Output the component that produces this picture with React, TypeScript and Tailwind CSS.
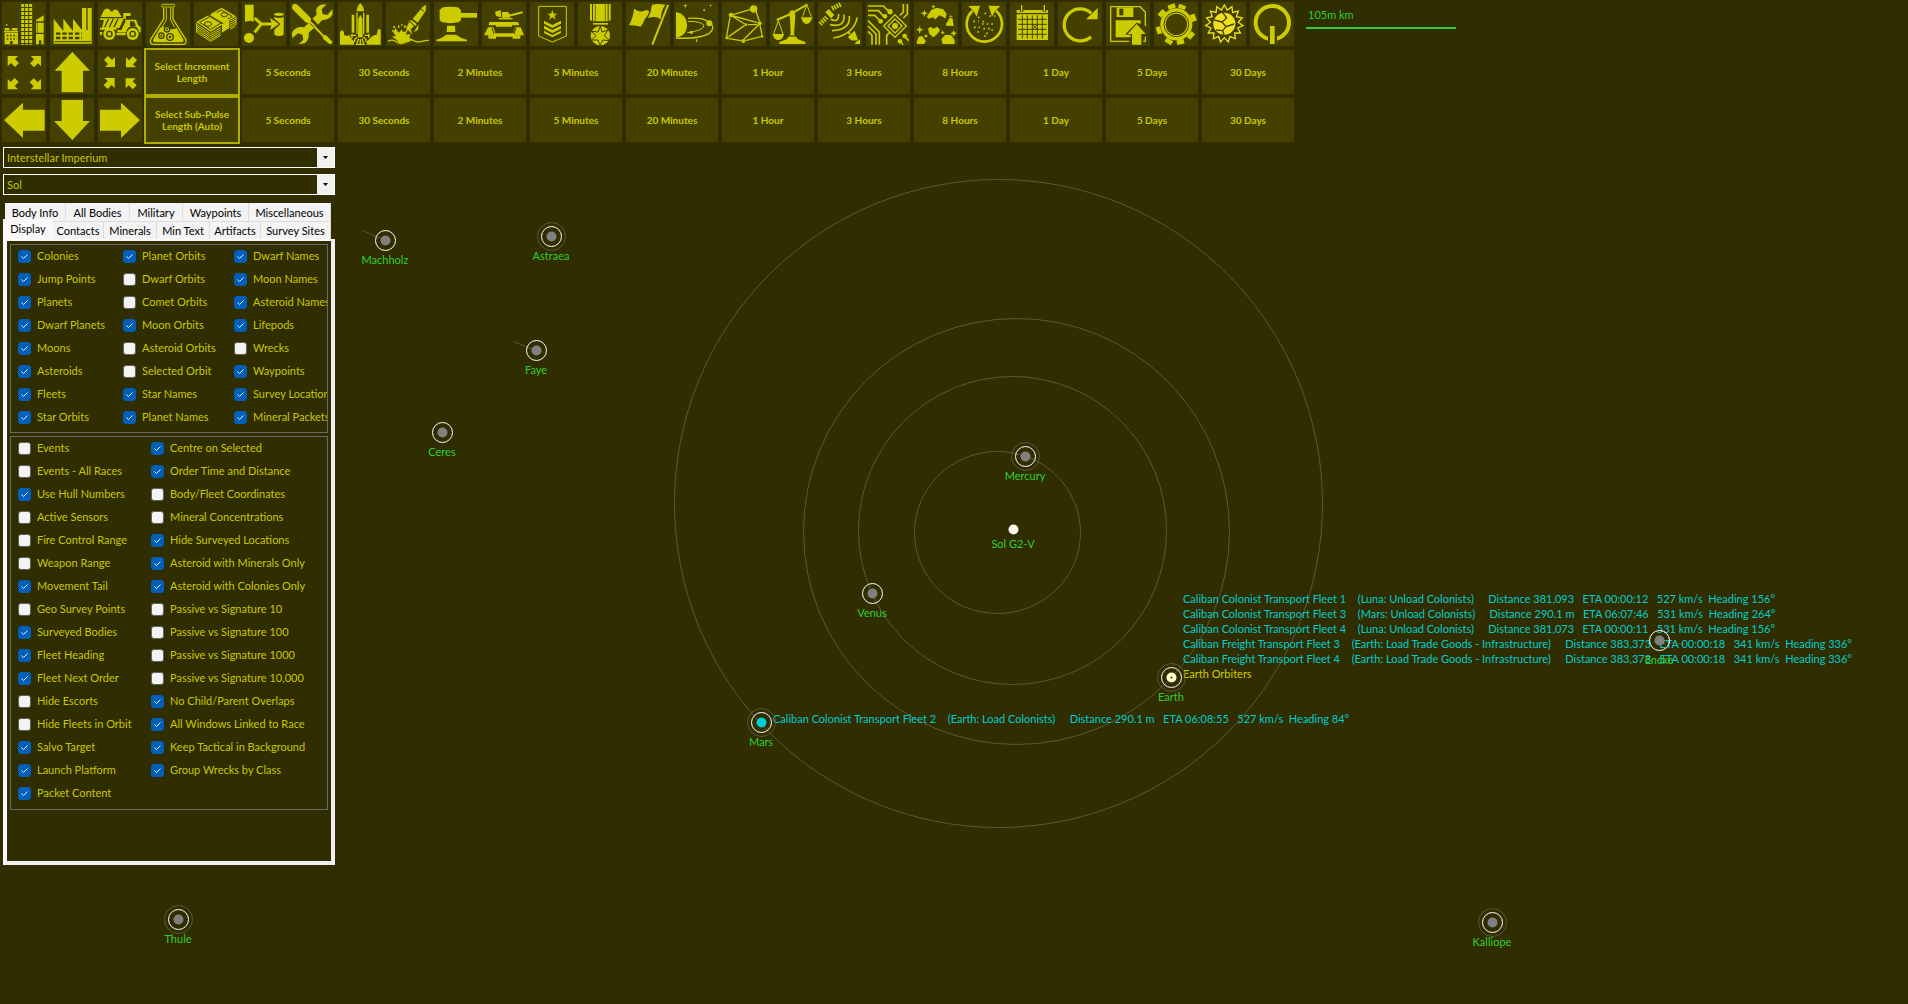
import { useState, type ReactNode } from 'react';

const DARK = '#444100';

type Icon = { label: string; art: ReactNode };

function Art({ children }: { children: ReactNode }) {
  return (
    <svg viewBox="0 0 132 132" className="block size-11" fill="currentColor" aria-hidden="true">
      {children}
    </svg>
  );
}

const line = { fill: 'none', stroke: 'currentColor' } as const;
const cut = { fill: 'none', stroke: DARK } as const;

const rays = (n: number, r1: number, r2: number, cx: number, cy: number) =>
  Array.from({ length: n * 2 }, (_, i) => {
    const a = (Math.PI * i) / n - Math.PI / 2;
    const r = i % 2 ? r2 : r1;
    return `${(cx + r * Math.cos(a)).toFixed(1)},${(cy + r * Math.sin(a)).toFixed(1)}`;
  }).join(' ');

const tools: Icon[] = [
  {
    label: 'Colonies',
    art: (
      <>
        <path {...line} strokeWidth="9" strokeDasharray="9 3" d="M62 6V128M74 6V128M86 6V128" />
        <path d="M12 66h4v5h-4zM8 78h14v7H8zM30 78h16v7H30zM6 86h42v5H6zM8 92h40v35H8z" />
        <path {...cut} strokeWidth="5" strokeDasharray="5 5" d="M14 101H45M14 111H45" />
        <path fill={DARK} d="M24 117h8v10h-8z" />
        <path d="M102 54L125 40V58H102zM102 62h23v30h-23zM102 96h23v31h-7v-12h-7v12h-9z" />
        <path {...cut} strokeWidth="2" d="M106 62v30" />
      </>
    ),
  },
  {
    label: 'Industry',
    art: (
      <>
        <path d="M11 125V50L40 87V50L69 87V50L96 84V18h13V84h4V18h12V125z" />
        <path {...cut} strokeWidth="7" strokeDasharray="13 6" d="M18 95H96M18 108H96" />
        <path {...cut} strokeWidth="3" d="M14 119H122" />
      </>
    ),
  },
  {
    label: 'Mining',
    art: (
      <>
        <path d="M8 45L18 24Q28 14 38 26L42 30Q50 18 60 26L71 45zM6 49H76V33H98V42H84V50H77L64 78H56V83H6V77H12L18 54H6z" />
        <path {...cut} strokeWidth="4" d="M32 50L20 76M46 50L34 76M60 50L48 76" />
        <path d="M82 53H114L121 70L128 76V91H123A19 19 0 0 0 85 91H58V84H70L82 60z" />
        <path fill={DARK} d="M96 58h12l6 14H96z" />
        <path d="M6 90H14L10 100H6zM55 92H84L82 100H56z" />
        <circle cx="34" cy="96" r="18" />
        <circle cx="34" cy="96" r="8" {...cut} strokeWidth="4" />
        <circle cx="104" cy="96" r="18" />
        <circle cx="104" cy="96" r="8" {...cut} strokeWidth="4" />
      </>
    ),
  },
  {
    label: 'Research',
    art: (
      <>
        <rect x="47" y="7" width="39" height="8" rx="3" {...line} strokeWidth="3" />
        <path {...line} strokeWidth="4" d="M53 17V51L14 112Q10 127 24 127H110Q124 127 119 112L81 51V17" />
        <path {...line} strokeWidth="3" d="M61 19V54L48 76M74 19V54L86 76" />
        <path d="M42 78Q54 70 66 78T92 78L112 112Q115 121 106 121H28Q19 121 22 112z" />
        <g fill={DARK}>
          <circle cx="63" cy="82" r="10" />
          <circle cx="46" cy="101" r="10" />
          <circle cx="72" cy="105" r="12" />
        </g>
        <circle cx="63" cy="82" r="6" />
        <circle cx="46" cy="101" r="6" />
        <circle cx="72" cy="105" r="8" />
        <g fill={DARK}>
          <circle cx="63" cy="82" r="3" />
          <circle cx="46" cy="101" r="3" />
          <circle cx="72" cy="105" r="4" />
        </g>
      </>
    ),
  },
  {
    label: 'Wealth',
    art: (
      <>
        <path d="M7 60L83 17L126 43L50 89z" />
        <path {...cut} strokeWidth="3" d="M17 61L82 24L115 43L50 82z" />
        <path fill={DARK} d="M41 41L49 36L93 62L85 67z" />
        <path d="M48 40L66 30L106 53L88 64z" />
        <path d="M84 67L106 54V78L84 92z" />
        <ellipse cx="42" cy="66" rx="11" ry="7" {...cut} strokeWidth="3" />
        <ellipse cx="91" cy="38" rx="10" ry="6" {...cut} strokeWidth="3" />
        <path
          {...line}
          strokeWidth="3"
          d="M7 66L50 95L80 77M7 72L50 101L80 83M7 78L50 107L80 89M7 84L50 113L80 95M7 90L50 118L80 100M108 58L126 48M108 64L126 54M108 70L126 60M108 76L126 66M108 82L124 73"
        />
        <path {...line} strokeWidth="3" d="M8 62V90M126 45V68" />
      </>
    ),
  },
  {
    label: 'Race Design',
    art: (
      <>
        <path d="M9 8H35V60L27 56L9 59z" />
        <circle cx="21" cy="108" r="15" />
        <path {...line} strokeWidth="9" d="M38 48L58 66L38 91M57 66H94" />
        <path d="M84 48L111 66L84 84L90 66z" />
        <ellipse cx="111" cy="37" rx="15" ry="5" />
        <path d="M97 44Q111 52 125 44V98Q111 106 97 98V83L116 66L97 50z" />
      </>
    ),
  },
  {
    label: 'Ship Design',
    art: (
      <>
        <path d="M8 8Q16 2 24 10L60 46Q66 54 60 60Q54 66 46 60L10 24Q3 16 8 8z" />
        <path {...line} strokeWidth="6" d="M57 57L102 104" />
        <path d="M98 101L107 98L126 118Q128 128 118 126L99 110z" />
        <path d="M92 8Q82 12 78 24L80 38L67 50L84 68L96 55Q120 54 128 36L127 22L112 39L98 36L95 22L110 7z" />
        <path d="M62 58L78 73L56 92Q59 112 44 124L26 127L40 113L37 98L24 94L8 108Q1 92 14 82Q24 72 42 76z" />
        <path {...cut} strokeWidth="3" d="M60 64L72 76M66 50L80 64" />
      </>
    ),
  },
  {
    label: 'Shipyards',
    art: (
      <>
        <path d="M6 90L12 84L18 90V98L26 102L34 100L42 112L48 118V128H6z" />
        <path d="M128 82L120 82L116 98L108 100L100 104L94 112L86 118V128H128z" />
        <path d="M41 38H49V92H41zM85 38H93V92H85z" />
        <path d="M55 28L60 12L67 3L74 12L79 28z" />
        <path {...line} strokeWidth="4" d="M57 32V96M77 32V96" />
        <path d="M67 38L73 50L74 106H60L61 50z" />
        <path {...line} strokeWidth="4" d="M38 100H54M80 100H96M42 96V108M92 96V108M58 106L50 112V120M76 106L84 112V120" />
        <path {...line} strokeWidth="4" d="M62 110L56 127H78L72 110M67 112V127" />
      </>
    ),
  },
  {
    label: 'Missiles',
    art: (
      <>
        <path d="M120 8L110 15L80 50L95 62L119 26z" />
        <path {...cut} strokeWidth="3" d="M104 20L114 28" />
        <path d="M76 54L92 66L88 72L72 58zM70 60L84 72L74 82L80 98L66 84L60 94L62 74zM68 56L74 50L78 44L64 64zM92 76L98 66L96 84L84 90z" />
        <path d="M28 78L38 92L48 82L50 90L62 88L60 98L74 96L70 108L80 112L68 120L40 124L30 112L18 104L30 102L22 92z" />
        <path {...line} strokeWidth="4" d="M6 118Q20 110 32 120T60 120T84 116T108 118T128 116" />
        <path d="M22 72h5v6h-5zM36 70h4v8h-4zM18 84h5v5h-5zM54 70h5v8h-5zM46 66h3v7h-3z" />
      </>
    ),
  },
  {
    label: 'Ground Forces',
    art: (
      <>
        <path d="M24 17Q30 14 48 14Q68 14 74 17L81 25V54L74 61Q48 66 24 61L17 54V25z" />
        <path d="M81 33H129V47H81z" />
        <path d="M39 71H63L64 90H38zM37 98H66L82 108L99 113V118H7V113L22 108z" />
      </>
    ),
  },
  {
    label: 'Ground Combat',
    art: (
      <>
        <path d="M39 29L56 24L58 46L42 42zM60 30H78L88 42H84V47H60z" />
        <path {...line} strokeWidth="6" d="M74 43L122 31" />
        <path {...line} strokeWidth="4" d="M50 50H92" />
        <path d="M22 60H108L112 70H90V74H42V70H20zM18 76H34L40 94H94L100 76H116L126 100H98V104H36V100H6z" />
        <path {...cut} strokeWidth="3" d="M30 78L36 96M102 78L96 96M40 82H94" />
        <path d="M18 100H42V110H20zM92 100H116L114 110H92z" />
      </>
    ),
  },
  {
    label: 'Commanders',
    art: (
      <>
        <path {...line} strokeWidth="3" d="M26 13H109V102L67 120L26 102z" />
        <path d="M67 24L71 35H82L73 42L77 53L67 46L57 53L61 42L52 35H63z" />
        <path d="M42 56L67 69L93 56V65L67 78L42 65zM42 71L67 84L93 71V80L67 93L42 80zM42 86L67 99L93 86V93L67 106L42 93z" />
      </>
    ),
  },
  {
    label: 'Medals',
    art: (
      <>
        <path d="M36 6H42V57L36 54zM45 6H89V58H45zM92 6H98V54L92 57z" />
        <path {...cut} strokeWidth="2" d="M52 8V58M82 8V58" />
        <path d="M45 63H90V68H45z" />
        <circle cx="67" cy="101" r="29" />
        <path
          {...cut}
          strokeWidth="3"
          d="M67 72L72 90L90 84L79 101L94 116L74 114L66 130L60 114L40 114L54 101L40 88L60 90z"
        />
      </>
    ),
  },
  {
    label: 'Race',
    art: (
      <>
        <path d="M24 20Q42 34 62 24L69 27Q68 40 56 52Q52 66 44 74Q28 68 9 70Q22 46 24 20z" />
        <path d="M78 8Q96 4 118 8Q106 24 104 52Q92 40 66 48Q76 30 78 8z" />
        <path {...line} strokeWidth="6" d="M126 9L79 128" />
      </>
    ),
  },
  {
    label: 'System View',
    art: (
      <>
        <path d="M6 30Q38 36 39 68Q39 102 6 106z" />
        <path {...line} strokeWidth="4" d="M42 49Q84 46 100 58M108 62Q126 78 106 94Q76 112 6 108" />
        <path {...line} strokeWidth="3" d="M42 58Q88 58 90 72Q86 86 40 92" />
        <circle cx="106" cy="64" r="9" />
        <circle cx="52" cy="91" r="5" />
        <path d="M34 5l2 5 5 1-5 2-2 5-2-5-5-1 5-2zM107 8h5v5h-5zM88 22h5v5h-5zM66 112h4v7h-4z" />
      </>
    ),
  },
  {
    label: 'Galactic Map',
    art: (
      <>
        <circle cx="95" cy="21" r="11" />
        <circle cx="27" cy="39" r="7" />
        <circle cx="113" cy="64" r="6" />
        <circle cx="72" cy="68" r="4" />
        <circle cx="64" cy="117" r="6" />
        <circle cx="15" cy="107" r="5" />
        <circle cx="120" cy="103" r="4" />
        <path
          {...line}
          strokeWidth="4"
          d="M33 38L86 22M102 28L112 58M30 42L68 66M34 42L106 62M78 68H106M24 46L14 102M20 104L68 70M20 110L58 116M66 112L110 68M70 116L116 104M114 70L120 98"
        />
      </>
    ),
  },
  {
    label: 'Comparison',
    art: (
      <>
        <path d="M58 30Q66 20 74 28L76 44L72 96L84 112L106 120V126H28V120L50 112L62 96L60 50z" />
        <path fill={DARK} d="M56 100H80V104H56z" />
        <path {...line} strokeWidth="6" d="M20 54L62 36L112 7" />
        <path {...line} strokeWidth="3" d="M25 56L11 96M25 56L39 96M110 8L98 44M110 8L124 44" />
        <path d="M8 96H42Q38 114 25 114T8 96zM93 46H127Q122 66 110 66T93 46z" />
      </>
    ),
  },
  {
    label: 'Sensors',
    art: (
      <>
        <path {...line} strokeWidth="14" d="M27 26L44 44" />
        <path {...line} strokeWidth="14" strokeDasharray="5 3" d="M42 20L70 6M6 66L26 46" />
        <path
          {...line}
          strokeWidth="5"
          d="M38 52Q62 64 62 36M36 68Q82 78 78 38M42 86Q98 84 94 42M46 108Q106 98 118 46"
        />
        <path d="M110 86L120 114Q98 120 90 104zM92 88L98 94L94 98L88 92z" />
        <path d="M126 112V126H110L114 120z" />
      </>
    ),
  },
  {
    label: 'Technology',
    art: (
      <>
        <path
          {...line}
          strokeWidth="5"
          d="M6 12H52L66 26M6 26H38L52 42M6 40H26L40 54M6 56L40 90V128M6 72L30 96V128M6 88L18 100V128"
        />
        <path {...line} strokeWidth="5" d="M102 40L112 30V6M112 48L124 36V6M62 128V100L72 90M116 104L128 116" />
        <circle cx="72" cy="29" r="8" />
        <circle cx="57" cy="43" r="7" />
        <circle cx="44" cy="58" r="7" />
        <circle cx="116" cy="102" r="7" />
        <circle cx="102" cy="118" r="7" />
        <path {...line} strokeWidth="4" d="M87 38L121 72L87 106L53 72zM87 51L108 72L87 93L66 72z" />
        <circle cx="87" cy="72" r="9" />
        <path {...line} strokeWidth="4" d="M106 122L112 128" />
      </>
    ),
  },
  {
    label: 'Minerals',
    art: (
      <>
        <path d="M38 44L52 24L68 17L88 22L98 36L94 50L86 44L76 40L64 52L56 46L44 50z" />
        <path d="M96 66L108 46L116 50L119 72L96 71zM42 80L50 74L58 80L70 74L78 84L70 96L58 106L46 96zM8 120L14 104L24 102L36 118L30 126H10zM82 112L94 98L112 100L122 114V126H86z" />
        <path d="M31 23l3 8 8 3-8 3-3 8-3-8-8-3 8-3zM58 7l2 5 5 2-5 2-2 5-2-5-5-2 5-2zM17 72l3 8 9 3-9 3-3 9-3-9-9-3 9-3zM119 84l3 7 7 3-7 3-3 8-3-8-7-3 7-3zM36 96l2 4 5 2-5 2-2 5-2-5-5-2 5-2zM86 84l2 6 5 2-5 2-2 5-2-5-5-2 5-2zM111 38l2 5 5 2h-14l5-2z" />
      </>
    ),
  },
  {
    label: 'Turn Events',
    art: (
      <>
        <path {...line} strokeWidth="8" d="M32 26A53 53 0 1 0 102 26" />
        <path d="M19 12L54 11L44 44L35 28zM115 12L80 11L90 44L99 28z" />
        <path
          {...line}
          strokeWidth="5"
          strokeDasharray="5 9"
          d="M70 32V40M48 46H62M82 42H100M34 58H50M60 66H100M64 56V64M36 76H54M64 80H84M46 90H60M72 94H80M88 84H96M66 102H74"
        />
      </>
    ),
  },
  {
    label: 'Calendar',
    art: (
      <>
        <path d="M33 9h4v20h-4zM101 9h4v20h-4zM20 24H30V30H40V24H98V30H108V24H114V33H20zM20 37H114V114H20z" />
        <path
          {...cut}
          strokeWidth="3"
          d="M24 52H110M24 67H110M24 82H110M24 97H110M37 40V110M52 40V110M67 40V110M82 40V110M97 40V110"
        />
        <path {...cut} strokeWidth="3" d="M68 68L81 81M81 68L68 81" />
      </>
    ),
  },
  {
    label: 'Refresh',
    art: (
      <>
        <path {...line} strokeWidth="10" d="M100 34A48 48 0 1 0 99 104" />
        <path d="M119 18V52H84z" />
      </>
    ),
  },
  {
    label: 'Save',
    art: (
      <>
        <path {...line} strokeWidth="4" d="M70 118H14V14H102L118 30V72M112 118H118V104" />
        <path d="M29 55H104V66L92 62L62 92L58 98H74V106H29z" />
        <path d="M32 16H82V45H32z" />
        <path fill={DARK} d="M40 20H52V40H40z" />
        <path d="M92 66L119 96H106V128H78V96H65z" />
      </>
    ),
  },
  {
    label: 'Settings',
    art: (
      <>
        <circle cx="67" cy="67" r="48" />
        <path
          {...line}
          strokeWidth="22"
          d="M82 20L86 9M111 50L125 45M105 95L116 105M78 113L81 127M48 112L41 124M21 83L8 87M29 39L18 29M55 20L51 7"
        />
        <circle cx="67" cy="67" r="32" fill={DARK} />
        <circle cx="67" cy="67" r="37" {...cut} strokeWidth="3" />
      </>
    ),
  },
  {
    label: 'Space Master',
    art: (
      <g fill="#f0e020">
        <polygon points={rays(15, 56, 42, 67, 65)} fill="none" stroke="#f0e020" strokeWidth="4" />
        <circle cx="67" cy="65" r="33" />
        <path
          {...cut}
          strokeWidth="4"
          d="M62 32L74 48L60 60L72 74L96 66M60 60L36 54M72 74L62 86L66 98M62 86L42 84"
        />
      </g>
    ),
  },
  {
    label: 'Auto Turns',
    art: (
      <>
        <circle cx="67" cy="62" r="50" {...line} strokeWidth="12" />
        <path fill={DARK} d="M54 72H81V126H54z" />
        <path d="M60 72H74V126H60z" />
      </>
    ),
  },
];

const outward = '17,18 48,18 39,27 51,39 39,51 27,39 17,49';
const inward = '51,51 51,21 42,30 30,18 18,30 30,42 21,51';

function Corners({ points }: { points: string }) {
  return (
    <>
      <polygon points={points} />
      <polygon points={points} transform="rotate(90 67 68)" />
      <polygon points={points} transform="rotate(180 67 68)" />
      <polygon points={points} transform="rotate(270 67 68)" />
    </>
  );
}

const moves: Icon[][] = [
  [
    { label: 'Zoom In', art: <Corners points={outward} /> },
    { label: 'Up', art: <polygon points="67,6 120,62 99,62 99,127 35,127 35,62 14,62" /> },
    { label: 'Zoom Out', art: <Corners points={inward} /> },
  ],
  [
    { label: 'Left', art: <polygon points="6,66 63,14 63,35 128,35 128,98 63,98 63,120" /> },
    { label: 'Down', art: <polygon points="35,6 99,6 99,69 120,69 67,126 12,69 35,69" /> },
    { label: 'Right', art: <polygon points="126,66 69,14 69,35 6,35 6,98 69,98 69,120" /> },
  ],
];

const durations = [
  '5 Seconds', '30 Seconds', '2 Minutes', '5 Minutes', '20 Minutes', '1 Hour',
  '3 Hours', '8 Hours', '1 Day', '5 Days', '30 Days',
];

function IconButton({ icon }: { icon: Icon }) {
  return (
    <button type="button" aria-label={icon.label} className="size-11 shrink-0 bg-[#444100] text-[#cccc00]">
      <Art>{icon.art}</Art>
    </button>
  );
}

function TimeButton({ text, selected = false }: { text: string; selected?: boolean }) {
  return (
    <button
      type="button"
      className={
        selected
          ? 'h-11 w-23 shrink-0 bg-[#444100] px-1 text-[10px] leading-3 font-bold text-[#c8c800] ring-2 ring-[#b0ac00]'
          : 'h-11 w-23 shrink-0 bg-[#444100] px-1 text-[10px] leading-3 font-bold text-[#c8c800]'
      }
    >
      {text}
    </button>
  );
}

function Toolbar() {
  return (
    <div className="flex flex-col gap-1 p-0.5">
      <div className="flex gap-1">
        {tools.map((t) => (
          <IconButton key={t.label} icon={t} />
        ))}
      </div>
      {moves.map((row, i) => (
        <div key={i} className="flex gap-1">
          {row.map((m) => (
            <IconButton key={m.label} icon={m} />
          ))}
          <TimeButton selected text={i === 0 ? 'Select Increment Length' : 'Select Sub-Pulse Length (Auto)'} />
          {durations.map((d) => (
            <TimeButton key={d} text={d} />
          ))}
        </div>
      ))}
    </div>
  );
}

function Dropdown({ label, options }: { label: string; options: string[] }) {
  return (
    <div className="relative border border-white">
      <select
        aria-label={label}
        className="block h-[19px] w-full appearance-none bg-[#302d00] pt-0.5 pr-5 pl-[3px] text-[11px] text-[#c8c800] outline-none"
      >
        {options.map((o) => (
          <option key={o}>{o}</option>
        ))}
      </select>
      <span className="pointer-events-none absolute inset-y-0 right-0 flex w-[17px] items-center justify-center bg-[#f0f0f0]">
        <svg viewBox="0 0 5 3" className="h-[3px] w-[5px]" aria-hidden="true">
          <path d="M0 0H5L2.500 3z" fill="#000" />
        </svg>
      </span>
    </div>
  );
}

type Option = [string, boolean];

const displayOptions: Option[][] = [
  [['Colonies', true], ['Planet Orbits', true], ['Dwarf Names', true]],
  [['Jump Points', true], ['Dwarf Orbits', false], ['Moon Names', true]],
  [['Planets', true], ['Comet Orbits', false], ['Asteroid Names', true]],
  [['Dwarf Planets', true], ['Moon Orbits', true], ['Lifepods', true]],
  [['Moons', true], ['Asteroid Orbits', false], ['Wrecks', false]],
  [['Asteroids', true], ['Selected Orbit', false], ['Waypoints', true]],
  [['Fleets', true], ['Star Names', true], ['Survey Locations', true]],
  [['Star Orbits', true], ['Planet Names', true], ['Mineral Packets', true]],
];

const otherOptions: Option[][] = [
  [['Events', false], ['Centre on Selected', true]],
  [['Events - All Races', false], ['Order Time and Distance', true]],
  [['Use Hull Numbers', true], ['Body/Fleet Coordinates', false]],
  [['Active Sensors', false], ['Mineral Concentrations', false]],
  [['Fire Control Range', false], ['Hide Surveyed Locations', true]],
  [['Weapon Range', false], ['Asteroid with Minerals Only', true]],
  [['Movement Tail', true], ['Asteroid with Colonies Only', true]],
  [['Geo Survey Points', false], ['Passive vs Signature 10', false]],
  [['Surveyed Bodies', true], ['Passive vs Signature 100', false]],
  [['Fleet Heading', true], ['Passive vs Signature 1000', false]],
  [['Fleet Next Order', true], ['Passive vs Signature 10,000', false]],
  [['Hide Escorts', false], ['No Child/Parent Overlaps', true]],
  [['Hide Fleets in Orbit', false], ['All Windows Linked to Race', true]],
  [['Salvo Target', true], ['Keep Tactical in Background', true]],
  [['Launch Platform', true], ['Group Wrecks by Class', true]],
  [['Packet Content', true]],
];

function Check({ option: [text, on] }: { option: Option }) {
  const [checked, setChecked] = useState(on);
  return (
    <label className="flex h-[23px] items-center gap-1.5 overflow-hidden whitespace-nowrap">
      <span className="relative flex size-[13px] shrink-0">
        <input
          type="checkbox"
          checked={checked}
          onChange={(e) => setChecked(e.target.checked)}
          className="size-[13px] appearance-none rounded-[3px] border border-[#626262] bg-[#f3f3f3] checked:border-[#005fb8] checked:bg-[#005fb8]"
        />
        {checked && (
          <svg viewBox="0 0 13 13" className="pointer-events-none absolute inset-0 size-[13px]" aria-hidden="true">
            <path d="M3.500 6.500L5.500 8.500L9.500 4.500" fill="none" stroke="#e8f2fb" strokeWidth="1" />
          </svg>
        )}
      </span>
      {text}
    </label>
  );
}

const topTabs = ['Body Info', 'All Bodies', 'Military', 'Waypoints', 'Miscellaneous'];
const bottomTabs = ['Display', 'Contacts', 'Minerals', 'Min Text', 'Artifacts', 'Survey Sites'];

function SidePanel() {
  return (
    <aside className="ml-[3px] w-[332px] text-[11px] text-[#c8c800]">
      <div className="mt-[3px] flex flex-col gap-1.5">
        <Dropdown label="Race" options={['Interstellar Imperium']} />
        <Dropdown label="System" options={['Sol']} />
      </div>
      <div role="tablist" aria-label="Map settings" className="mt-2 pr-1 text-black">
        <div className="grid grid-cols-[61fr_64fr_53fr_66fr_82fr] pl-0.5">
          {topTabs.map((t) => (
            <button
              key={t}
              type="button"
              role="tab"
              aria-selected="false"
              className="h-[18px] border-r border-[#dcdcdc] bg-[#f3f3f3] pt-0.5 leading-4 whitespace-nowrap"
            >
              {t}
            </button>
          ))}
        </div>
        <div className="grid grid-cols-[50fr_51fr_53fr_53fr_51fr_70fr]">
          {bottomTabs.map((t, i) => (
            <button
              key={t}
              type="button"
              role="tab"
              aria-selected={i === 0}
              className={
                i === 0
                  ? 'z-10 -mt-0.5 h-5 bg-[#f9f9f9] leading-4 whitespace-nowrap'
                  : 'h-[18px] border-t border-r border-[#dcdcdc] bg-[#f3f3f3] pt-px leading-4 whitespace-nowrap'
              }
            >
              {t}
            </button>
          ))}
        </div>
      </div>
      <div
        role="tabpanel"
        aria-label="Display"
        className="flex min-h-[626px] flex-col gap-[3px] border-4 border-t-2 border-[#fafafa] border-r-[#f0f0f0] border-b-[#f0f0f0] p-[3px]"
      >
        <div className="grid grid-cols-[105px_111px_1fr] border border-[#696969] pb-[3px] pl-[7px]">
          {displayOptions.flat().map((o) => (
            <Check key={o[0]} option={o} />
          ))}
        </div>
        <div className="grid grid-cols-[133px_1fr] border border-[#696969] pb-1 pl-[7px]">
          {otherOptions.flat().map((o) => (
            <Check key={o[0]} option={o} />
          ))}
        </div>
      </div>
    </aside>
  );
}

type Body = {
  name: string;
  x: number;
  y: number;
  fill?: string;
  halo?: boolean;
  bare?: boolean;
  tail?: [number, number];
};

const bodies: Body[] = [
  { name: 'Machholz', x: 385, y: 240, tail: [362, 230] },
  { name: 'Astraea', x: 551, y: 236, halo: true },
  { name: 'Faye', x: 536, y: 350, tail: [513, 341] },
  { name: 'Ceres', x: 442, y: 432 },
  { name: 'Mercury', x: 1025, y: 456, halo: true },
  { name: 'Sol G2-V', x: 1013, y: 529, fill: '#fff5ee', bare: true },
  { name: 'Venus', x: 872, y: 593 },
  { name: 'Earth', x: 1171, y: 677, fill: '#ffffcc', halo: true },
  { name: 'Mars', x: 761, y: 722, fill: '#00ced1', halo: true },
  { name: 'Encke', x: 1659, y: 640, tail: [1684, 644] },
  { name: 'Thule', x: 178, y: 919, halo: true },
  { name: 'Kalliope', x: 1492, y: 922, halo: true },
];

type FleetInfo = { name: string; order: string; status: string };

const earthFleets: FleetInfo[] = [
  {
    name: 'Caliban Colonist Transport Fleet 1',
    order: '(Luna: Unload Colonists)',
    status: 'Distance 381,093   ETA 00:00:12   527 km/s  Heading 156°',
  },
  {
    name: 'Caliban Colonist Transport Fleet 3',
    order: '(Mars: Unload Colonists)',
    status: 'Distance 290.1 m   ETA 06:07:46   531 km/s  Heading 264°',
  },
  {
    name: 'Caliban Colonist Transport Fleet 4',
    order: '(Luna: Unload Colonists)',
    status: 'Distance 381,073   ETA 00:00:11   531 km/s  Heading 156°',
  },
  {
    name: 'Caliban Freight Transport Fleet 3',
    order: '(Earth: Load Trade Goods - Infrastructure)',
    status: 'Distance 383,373   ETA 00:00:18   341 km/s  Heading 336°',
  },
  {
    name: 'Caliban Freight Transport Fleet 4',
    order: '(Earth: Load Trade Goods - Infrastructure)',
    status: 'Distance 383,373   ETA 00:00:18   341 km/s  Heading 336°',
  },
];

const marsFleet: FleetInfo = {
  name: 'Caliban Colonist Transport Fleet 2',
  order: '(Earth: Load Colonists)',
  status: 'Distance 290.1 m   ETA 06:08:55   527 km/s  Heading 84°',
};

function FleetLine({ fleet }: { fleet: FleetInfo }) {
  return (
    <p>
      <span className="mr-1.5">{fleet.name + '  '}</span>
      <span className="mr-1.5">{fleet.order + '   '}</span>
      {fleet.status}
    </p>
  );
}

function SystemMap() {
  return (
    <div className="absolute inset-0 overflow-hidden text-[11px] leading-[15px] whitespace-pre">
      <svg className="absolute inset-0 size-full" fill="none" aria-hidden="true">
        <g stroke="#5a583a" transform="translate(0.5 0.5)">
          <ellipse cx="997" cy="532" rx="83" ry="81" />
          <circle cx="1012" cy="530" r="154" />
          <circle cx="1016" cy="531" r="213" />
          <circle cx="998" cy="503" r="324" />
          {bodies.map((b) => b.tail && <path key={b.name} d={`M${b.x} ${b.y}L${b.tail[0]} ${b.tail[1]}`} />)}
        </g>
      </svg>
      <div className="absolute top-[591px] left-[1183px] text-[#00ced1]">
        {earthFleets.map((f) => (
          <FleetLine key={f.name} fleet={f} />
        ))}
        <p className="text-[#d0cc00]">Earth Orbiters</p>
      </div>
      <div className="absolute top-[711px] left-[773px] text-[#00ced1]">
        <FleetLine fleet={marsFleet} />
      </div>
      <svg className="absolute inset-0 size-full" fill="none" aria-hidden="true">
        <g transform="translate(0.5 0.5)">
          {bodies.map((b) => (
            <g key={b.name} transform={`translate(${b.x} ${b.y})`}>
              {b.halo && <circle r="14" stroke="#5a583a" />}
              {!b.bare && <circle r="10" stroke="#ffffff" />}
              <circle r="5" fill={b.fill ?? '#808080'} />
              {b.name === 'Earth' && <circle r="1" fill="#302d00" />}
            </g>
          ))}
        </g>
      </svg>
      {bodies.map((b) => (
        <span
          key={b.name}
          className="absolute -translate-x-1/2 text-[#32cd32]"
          style={{ left: b.x, top: b.y + (b.bare ? 7 : 12) }}
        >
          {b.name}
        </span>
      ))}
      <div className="absolute top-[7px] left-[1306px] w-[150px] border-b-2 border-[#32cd32] pb-[5px] pl-0.5 text-[#32cd32]">
        105m km
      </div>
    </div>
  );
}

export default function App() {
  return (
    <main className="relative min-h-screen overflow-hidden bg-[#302d00] font-['Lato',sans-serif]">
      <SystemMap />
      <div className="relative w-fit">
        <Toolbar />
        <SidePanel />
      </div>
    </main>
  );
}
